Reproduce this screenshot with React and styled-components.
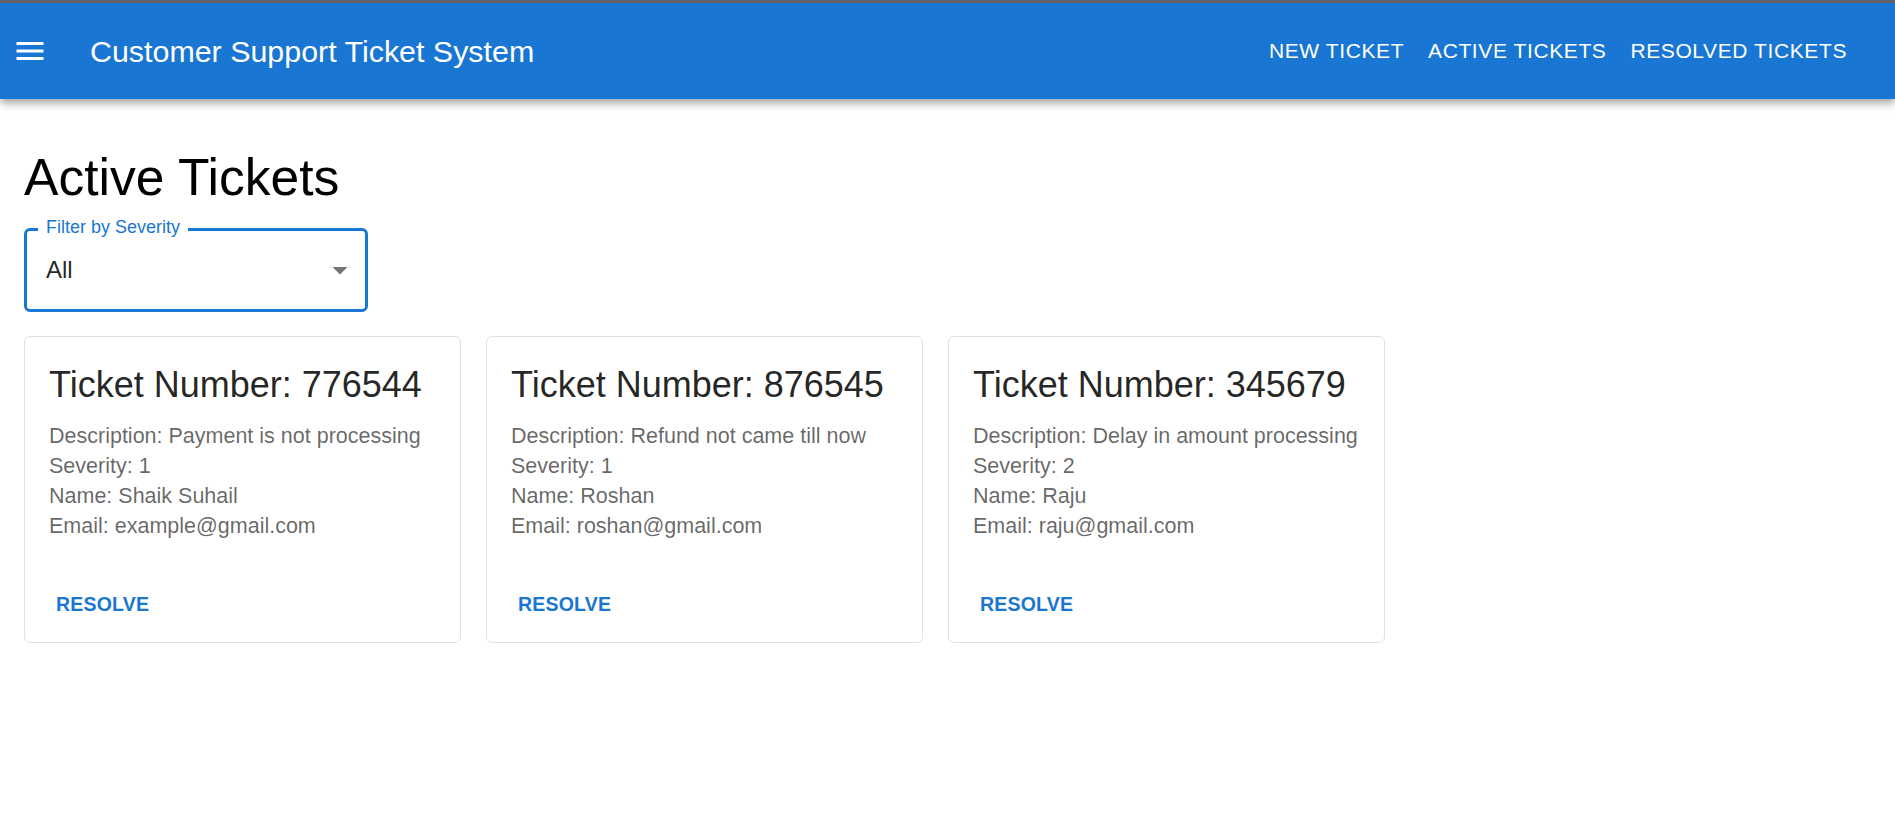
import React, { useState } from "react";
import styled, { createGlobalStyle } from "styled-components";

const GlobalStyle = createGlobalStyle`
  body {
    margin: 0;
    background: #fff;
    font-family: "Liberation Sans", Arial, sans-serif;
  }
`;

const tickets = [
  {
    number: "776544",
    description: "Payment is not processing",
    severity: 1,
    name: "Shaik Suhail",
    email: "example@gmail.com",
  },
  {
    number: "876545",
    description: "Refund not came till now",
    severity: 1,
    name: "Roshan",
    email: "roshan@gmail.com",
  },
  {
    number: "345679",
    description: "Delay in amount processing",
    severity: 2,
    name: "Raju",
    email: "raju@gmail.com",
  },
];

const MenuIcon = () => (
  <svg width="36" height="36" viewBox="0 0 24 24" fill="currentColor">
    <path d="M3 18h18v-2H3v2zm0-5h18v-2H3v2zm0-7v2h18V6H3z" />
  </svg>
);

const ArrowDrop = () => (
  <svg width="36" height="36" viewBox="0 0 24 24" fill="currentColor">
    <path d="M7 10l5 5 5-5z" />
  </svg>
);

const App = () => {
  const [severity] = useState("All");

  return (
    <>
      <GlobalStyle />
      <TopStrip />
      <AppBar>
        <MenuButton aria-label="menu">
          <MenuIcon />
        </MenuButton>
        <BrandTitle>Customer Support Ticket System</BrandTitle>
        <Nav>
          <NavButton>New Ticket</NavButton>
          <NavButton>Active Tickets</NavButton>
          <NavButton>Resolved Tickets</NavButton>
        </Nav>
      </AppBar>

      <Main>
        <PageTitle>Active Tickets</PageTitle>

        <SelectBox>
          <FloatingLabel>Filter by Severity</FloatingLabel>
          <SelectValue>{severity}</SelectValue>
          <ArrowWrap>
            <ArrowDrop />
          </ArrowWrap>
        </SelectBox>

        <CardGrid>
          {tickets.map((t) => (
            <Card key={t.number}>
              <CardContent>
                <CardTitle>Ticket Number: {t.number}</CardTitle>
                <InfoLine>Description: {t.description}</InfoLine>
                <InfoLine>Severity: {t.severity}</InfoLine>
                <InfoLine>Name: {t.name}</InfoLine>
                <InfoLine>Email: {t.email}</InfoLine>
              </CardContent>
              <CardActions>
                <ResolveButton>Resolve</ResolveButton>
              </CardActions>
            </Card>
          ))}
        </CardGrid>
      </Main>
    </>
  );
};

const TopStrip = styled.div`
  height: 3px;
  background: #63676c;
`;

const AppBar = styled.header`
  position: relative;
  z-index: 2;
  display: flex;
  align-items: center;
  height: 96px;
  padding: 0 36px 0 12px;
  background: #1976d2;
  color: #fff;
  box-shadow: 0 3px 6px -1.5px rgba(0, 0, 0, 0.2),
    0 6px 7.5px 0 rgba(0, 0, 0, 0.14), 0 1.5px 15px 0 rgba(0, 0, 0, 0.12);
`;

const MenuButton = styled.button`
  display: flex;
  padding: 0;
  border: none;
  background: none;
  color: inherit;
  cursor: pointer;
`;

const BrandTitle = styled.h1`
  flex: 1;
  margin: 0 0 0 42px;
  font-size: 30.4px;
  font-weight: 400;
  line-height: 48px;
`;

const Nav = styled.nav`
  display: flex;
`;

const NavButton = styled.button`
  padding: 9px 12px;
  border: none;
  background: none;
  color: #fff;
  font-family: inherit;
  font-size: 21px;
  line-height: 36px;
  letter-spacing: 0.6px;
  text-transform: uppercase;
  cursor: pointer;
`;

const Main = styled.main`
  padding: 0 24px;
`;

const PageTitle = styled.h2`
  margin: 47px 0 19px;
  font-size: 51.6px;
  font-weight: 400;
  line-height: 63px;
  color: #000;
`;

const SelectBox = styled.div`
  position: relative;
  box-sizing: border-box;
  display: flex;
  align-items: center;
  width: 344px;
  height: 84px;
  padding-left: 19px;
  border: 3px solid #1976d2;
  border-radius: 6px;
`;

const FloatingLabel = styled.span`
  position: absolute;
  top: -14px;
  left: 11px;
  padding: 0 8px;
  background: #fff;
  color: #1976d2;
  font-size: 18px;
  line-height: 20px;
`;

const SelectValue = styled.span`
  flex: 1;
  font-size: 24px;
  line-height: 28px;
  color: rgba(0, 0, 0, 0.87);
`;

const ArrowWrap = styled.span`
  display: flex;
  margin-right: 7px;
  color: #757575;
`;

const CardGrid = styled.div`
  display: grid;
  grid-template-columns: repeat(4, 437px);
  column-gap: 25px;
  margin-top: 24px;
`;

const Card = styled.div`
  border: 1px solid #e0e0e0;
  border-radius: 6px;
  background: #fff;
`;

const CardContent = styled.div`
  padding: 24px;
`;

const CardTitle = styled.h3`
  margin: 0 0 12px;
  font-size: 36px;
  font-weight: 400;
  line-height: 48px;
  color: rgba(0, 0, 0, 0.87);
`;

const InfoLine = styled.p`
  margin: 0;
  font-size: 21.5px;
  line-height: 30px;
  color: rgba(0, 0, 0, 0.6);
`;

const CardActions = styled.div`
  display: flex;
  padding: 18px 12px 17px;
`;

const ResolveButton = styled.button`
  padding: 6px 12px 6px 19px;
  border: none;
  background: none;
  color: #1976d2;
  font-family: inherit;
  font-size: 19.5px;
  font-weight: 700;
  line-height: 30px;
  letter-spacing: 0.2px;
  text-transform: uppercase;
  cursor: pointer;
`;

export default App;
